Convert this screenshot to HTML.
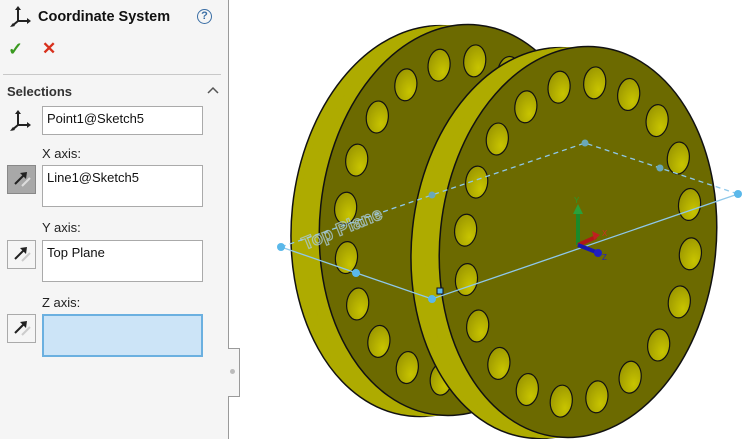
<!DOCTYPE html>
<html><head><meta charset="utf-8"><style>
body{margin:0;width:752px;height:439px;overflow:hidden;background:#fff;font-family:"Liberation Sans",sans-serif;position:relative}
.panel{position:absolute;left:0;top:0;width:228px;height:439px;background:#f5f5f5;border-right:1px solid #9a9a9a}
.tab{position:absolute;left:228px;top:348px;width:11px;height:47px;background:#f5f5f5;border:1px solid #9a9a9a;border-left:none}
.tab i{position:absolute;left:2px;top:20px;width:5px;height:5px;border-radius:50%;background:#bbb}
.t{position:absolute;font-size:13px;color:#222}
.box{position:absolute;left:42px;width:161px;background:#fff;border:1px solid #aaa;box-sizing:border-box;font-size:13px;padding:4px 4px;color:#111}
.btn{position:absolute;left:7px;width:29px;height:29px;box-sizing:border-box;border:1px solid #aaa;background:#f5f5f5}
</style></head><body>
<div class="panel">
<svg style="position:absolute;left:10px;top:6px" width="24" height="22" viewBox="0 0 24 22"><path d="M8 2v13M8 15l-6 5M8 15h10" stroke="#222" stroke-width="2" fill="none"/><path d="M8 0l-3 4h6zM21 15l-4-3v6zM0 21l5-1-2-3z" fill="#222"/></svg>
<div class="t" style="left:38px;top:9px;font-size:14.5px;font-weight:bold;color:#111">Coordinate System</div>
<div style="position:absolute;left:197px;top:9px;width:13px;height:13px;border:1.5px solid #3a6ea5;border-radius:50%;font-size:11px;font-weight:bold;color:#3a6ea5;text-align:center;line-height:13px">?</div>
<div class="t" style="left:8px;top:39px;font-size:18px;color:#3a9a20;font-weight:bold">✓</div>
<div class="t" style="left:42px;top:39px;font-size:17px;color:#d8301c;font-weight:bold">✕</div>
<div style="position:absolute;left:3px;top:74px;width:218px;height:1px;background:#c8c8c8"></div>
<div class="t" style="left:7px;top:84px;font-weight:bold;color:#333">Selections</div>
<svg style="position:absolute;left:207px;top:86px" width="12" height="8"><path d="M1 7l5-5 5 5" stroke="#555" stroke-width="1.5" fill="none"/></svg>
<svg style="position:absolute;left:10px;top:110px" width="24" height="22" viewBox="0 0 24 22"><path d="M8 2v13M8 15l-6 5M8 15h10" stroke="#222" stroke-width="2" fill="none"/><path d="M8 0l-3 4h6zM21 15l-4-3v6zM0 21l5-1-2-3z" fill="#222"/></svg>
<div class="box" style="top:106px;height:29px">Point1@Sketch5</div>
<div class="t" style="left:42px;top:146px">X axis:</div>
<div class="btn" style="top:165px;background:#a8a8a8;border-color:#888"><svg width="27" height="27"><path d="M7 18l10-10" stroke="#222" stroke-width="2"/><path d="M19 6l-7 1 6 6z" fill="#222"/><path d="M22 12l-8 8" stroke="#ddd" stroke-width="2"/></svg></div>
<div class="box" style="top:165px;height:42px">Line1@Sketch5</div>
<div class="t" style="left:42px;top:220px">Y axis:</div>
<div class="btn" style="top:240px"><svg width="27" height="27"><path d="M7 18l10-10" stroke="#222" stroke-width="2"/><path d="M19 6l-7 1 6 6z" fill="#222"/><path d="M22 12l-8 8" stroke="#ccc" stroke-width="2"/></svg></div>
<div class="box" style="top:240px;height:42px">Top Plane</div>
<div class="t" style="left:42px;top:295px">Z axis:</div>
<div class="btn" style="top:314px"><svg width="27" height="27"><path d="M7 18l10-10" stroke="#222" stroke-width="2"/><path d="M19 6l-7 1 6 6z" fill="#222"/><path d="M22 12l-8 8" stroke="#ccc" stroke-width="2"/></svg></div>
<div class="box" style="top:314px;height:43px;background:#cce4f7;border:2px solid #6bb0e0"></div>
</div>
<div class="tab"><i></i></div>
<svg style="position:absolute;left:0;top:0" width="752" height="439">
<defs>
<radialGradient id="hg" cx="0.7" cy="0.7" r="0.8"><stop offset="0" stop-color="#c8c400"/><stop offset="1" stop-color="#9a9600"/></radialGradient>
<g id="holes" fill="url(#hg)" stroke="#111" stroke-width="1.2">
<ellipse cx="113" cy="0" rx="11" ry="16"/><ellipse cx="107" cy="49" rx="11" ry="16"/><ellipse cx="91" cy="94" rx="11" ry="16"/><ellipse cx="66" cy="129" rx="11" ry="16"/><ellipse cx="35" cy="152" rx="11" ry="16"/><ellipse cx="0" cy="160" rx="11" ry="16"/><ellipse cx="-35" cy="152" rx="11" ry="16"/><ellipse cx="-66" cy="129" rx="11" ry="16"/><ellipse cx="-91" cy="94" rx="11" ry="16"/><ellipse cx="-107" cy="49" rx="11" ry="16"/><ellipse cx="-113" cy="0" rx="11" ry="16"/><ellipse cx="-107" cy="-49" rx="11" ry="16"/><ellipse cx="-91" cy="-94" rx="11" ry="16"/><ellipse cx="-66" cy="-129" rx="11" ry="16"/><ellipse cx="-35" cy="-152" rx="11" ry="16"/><ellipse cx="0" cy="-160" rx="11" ry="16"/><ellipse cx="35" cy="-152" rx="11" ry="16"/><ellipse cx="66" cy="-129" rx="11" ry="16"/><ellipse cx="91" cy="-94" rx="11" ry="16"/><ellipse cx="107" cy="-49" rx="11" ry="16"/>
</g>
<g id="disc">
<g fill="#aeab00"><ellipse cx="-28" cy="4" rx="138" ry="196" stroke="#111" stroke-width="1.5"/><ellipse cx="-21" cy="3" rx="138" ry="196"/><ellipse cx="-14" cy="2" rx="138" ry="196"/><ellipse cx="-7" cy="1" rx="138" ry="196"/></g>
<ellipse cx="0" cy="0" rx="138" ry="196" fill="#6c6a00" stroke="#111" stroke-width="1.5"/>
<use href="#holes"/>
</g>
</defs>
<g transform="translate(458,220) rotate(6)"><use href="#disc"/></g>
<g transform="translate(578,242) rotate(6)"><use href="#disc"/></g>
<g stroke="#8ec8ea" stroke-width="1.3" fill="none">
<path d="M281 247L432 195L585 143L738 194" stroke-dasharray="5 4"/>
<path d="M281 247L432 299L738 194"/>
</g>
<text x="0" y="0" transform="translate(305,250) rotate(-22)" font-size="18" font-weight="bold" fill="none" stroke="#a9c9d6" stroke-width="1.2" font-family="Liberation Sans" opacity="0.8">Top Plane</text>
<g fill="#5ab8ea"><circle cx="281" cy="247" r="4"/><circle cx="738" cy="194" r="4"/><circle cx="356" cy="273" r="4"/><circle cx="432" cy="299" r="4"/></g>
<g fill="#6aa8b8"><circle cx="585" cy="143" r="3.5"/><circle cx="660" cy="168" r="3.5"/><circle cx="432" cy="195" r="3.5"/></g>
<rect x="437" y="288" width="6" height="6" fill="#5ab8ea" stroke="#112" stroke-width="1"/>
<g>
<path d="M578 245V212" stroke="#1a8a2a" stroke-width="4"/><path d="M578 204l-5 10h10z" fill="#2aa03a"/>
<path d="M578 245l18-8" stroke="#b01818" stroke-width="4"/><path d="M600 235l-8-4 2 9z" fill="#c02020"/>
<path d="M578 245l18 7" stroke="#1818b0" stroke-width="4"/><circle cx="598" cy="253" r="4" fill="#2020c0"/>
<text x="574" y="203" font-size="8" fill="#2a9a2a">Y</text><text x="602" y="236" font-size="8" fill="#d03020">X</text><text x="602" y="260" font-size="8" fill="#2020c0">Z</text>
</g>
</svg>
</body></html>
